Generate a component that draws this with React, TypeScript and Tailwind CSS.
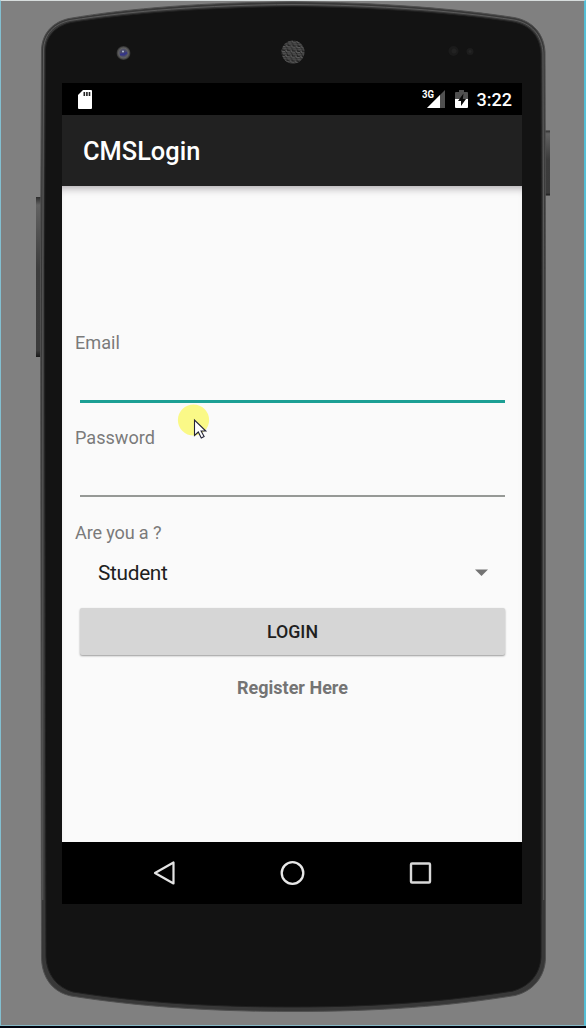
import React from "react";

function Chassis() {
  const outline =
    "M40.5 270 L41.5 50 C42 33 53 22 69 18.5 C130 8 205 2.500 293 1.800 C380 2.500 455 8.500 514 17.500 C533 21 544 34 545 52 L545.5 270 L545.5 958 C545 977 533 991 515 995.5 C450 1006 380 1011.5 293 1011.5 C205 1011.5 135 1006 71 996 C52 992 42 977 41.5 958 Z";
  const face =
    "M44.5 270 L45.5 50 C46 36 56 26 71 22.5 C131 13 205 7.5 293 6.5 C380 7.5 455 13 513 22 C530 25 540 36 541 54 L541.5 270 L541 957 C540 974 530 986 513 991 C450 1001 380 1007 293 1007 C205 1007 137 1002 73 992 C56 987 47 974 46 957 Z";
  return (
    <svg className="absolute inset-0" width="586" height="1028" viewBox="0 0 586 1028" aria-hidden="true">
      <defs>
        <linearGradient id="side" x1="0" y1="0" x2="0" y2="1">
          <stop offset="0" stopColor="#2c2c2c" />
          <stop offset=".05" stopColor="#626262" />
          <stop offset=".45" stopColor="#3c3c3c" />
          <stop offset=".96" stopColor="#3b3b3b" />
          <stop offset="1" stopColor="#191919" />
        </linearGradient>
        <radialGradient id="lens">
          <stop offset="0" stopColor="#3c3d72" />
          <stop offset=".45" stopColor="#4a4b69" />
          <stop offset=".7" stopColor="#606060" />
          <stop offset="1" stopColor="#2d2d2d" />
        </radialGradient>
        <pattern id="mesh" width="5" height="5" patternUnits="userSpaceOnUse" patternTransform="rotate(4)">
          <path d="M0 1.500H3V4H5M1 1.500V4H3M3 .3H5M4.500 .3V2" fill="none" stroke="#666" strokeWidth=".8" />
        </pattern>
      </defs>
      <rect x="36" y="197" width="6" height="160" fill="url(#side)" />
      <rect x="544" y="130.500" width="6" height="65" fill="url(#side)" />
      <path d={outline} fill="#383838" stroke="#505050" strokeWidth="1" />
      <path d={face} fill="#131313" stroke="#202020" strokeWidth="1" />
      <path d="M42.800 900V270L43.500 50C44 34 54 24 70 20.500C131 11 205 5 293 4.500C380 5 455 11 514 20C531 23 542 35 543 53L543.700 270V900" fill="none" stroke="#606060" strokeWidth=".9" />
      <circle cx="123.500" cy="53" r="7" fill="url(#lens)" />
      <circle cx="123" cy="51.500" r="1" fill="#b5bfd3" />
      <path d="M120 54.500h4l3-2" fill="none" stroke="#343489" strokeWidth="2" />
      <circle cx="293" cy="52" r="11.500" fill="#222" />
      <circle cx="293" cy="52" r="11.500" fill="url(#mesh)" />
      <circle cx="453.500" cy="51" r="5" fill="#1b1b1b" />
      <circle cx="454" cy="51" r="2.500" fill="#222" />
      <circle cx="470" cy="51.500" r="3.500" fill="#1d1d1d" />
      <circle cx="470" cy="51.500" r="1.500" fill="#252525" />
    </svg>
  );
}

function StatusBar() {
  return (
    <div className="flex h-8 shrink-0 items-center bg-black pl-4 pr-[10px] text-white">
      <svg width="14" height="19" viewBox="0 0 14 19" aria-label="SD card">
        <path d="M5 0H13Q14 0 14 1V18Q14 19 13 19H1Q0 19 0 18V5Z" fill="#fff" />
        <path d="M5.500 2h1.600v4H5.500zM8.100 2h1.600v4H8.100zM10.700 2h1.600v4h-1.600z" fill="#222" />
      </svg>
      <div className="ml-auto flex items-center">
        <svg width="24" height="20" viewBox="0 0 24 20" aria-label="3G signal">
          <path d="M23 1V19H5Z" fill="#505050" />
          <path d="M18 6V19H5Z" fill="#fff" />
          <text x="0" y="9.200" fill="#fff" fontFamily="Roboto" fontSize="10" fontWeight="700" textLength="12" lengthAdjust="spacingAndGlyphs">3G</text>
        </svg>
        <svg className="ml-[9px]" width="13" height="20" viewBox="0 0 13 20" aria-label="Charging">
          <path d="M4 1h5v2h3q1 0 1 1v6H0V4q0-1 1-1h3Z" fill="#505050" />
          <path d="M0 10h13v8q0 1-1 1H1q-1 0-1-1Z" fill="#fff" />
          <path d="M8.500 4.500 3 12h3v5l5-7H7.800Z" fill="#080808" />
        </svg>
        <span className="ml-[9px] translate-y-px text-[18px] leading-none font-medium">3:22</span>
      </div>
    </div>
  );
}

function TextField({ label, type, active }: { label: string; type: string; active?: boolean }) {
  return (
    <label className="block h-[95px] text-[18.100px] leading-[22px] text-[#7a7a7a]">
      {label}
      <input
        type={type}
        aria-label={label}
        className={
          active
            ? "ml-[5px] mt-[7px] block h-[42px] w-[425px] border-b-[3px] border-[#1c9f94] bg-transparent outline-none"
            : "ml-[5px] mt-[7px] block h-[41px] w-[425px] border-b-2 border-[#969996] bg-transparent outline-none"
        }
      />
    </label>
  );
}

function LoginForm() {
  return (
    <main className="h-[656px] shrink-0 bg-[#fafafa] shadow-[inset_0_8px_8px_-6px_#a8a3a8]">
      <form className="pl-[13px] pt-[146px]" onSubmit={(e) => e.preventDefault()}>
        <TextField label="Email" type="email" active />
        <TextField label="Password" type="password" />
        <div className="text-[18.100px] leading-[22px] tracking-[-0.150px] text-[#7a7a7a]">Are you a ?</div>
        <button type="button" className="ml-[5px] mt-[14px] flex h-[30px] w-[425px] items-center justify-between pl-[18px] pr-[17px] text-[20.800px] leading-none tracking-[-0.300px] text-[#202020]">
          Student
          <svg width="13" height="8" viewBox="0 0 13 8" aria-hidden="true">
            <path d="M0 .5h13L6.500 7Z" fill="#737373" />
          </svg>
        </button>
        <button type="submit" className="ml-[5px] mt-[20px] block h-[47px] w-[425px] rounded-[2px] bg-[#d6d6d6] pt-px text-[17.800px] font-medium text-[#202020] shadow-[0_1px_2px_#999]">
          LOGIN
        </button>
        <div className="ml-[5px] mt-[22px] w-[425px] text-center text-[18px] leading-[22px] font-bold text-[#747474]">Register Here</div>
      </form>
    </main>
  );
}

function NavigationBar() {
  return (
    <nav className="grid h-[62px] shrink-0 grid-cols-3 items-center justify-items-center bg-black px-[38px]">
      <svg width="26" height="26" viewBox="0 0 26 26" aria-label="Back">
        <path d="M4 13 22.500 2.500v21Z" fill="none" stroke="#e4e4e4" strokeWidth="2.200" strokeLinejoin="round" />
      </svg>
      <svg width="26" height="26" viewBox="0 0 26 26" aria-label="Home">
        <circle cx="13.500" cy="13" r="10.800" fill="none" stroke="#e8e8e8" strokeWidth="2.300" />
      </svg>
      <svg width="26" height="26" viewBox="0 0 26 26" aria-label="Recent apps">
        <rect x="4" y="3.500" width="19" height="19" rx="1" fill="none" stroke="#d9d9d9" strokeWidth="2.400" />
      </svg>
    </nav>
  );
}

function Pointer() {
  return (
    <svg className="pointer-events-none absolute left-[177px] top-[403px]" width="34" height="38" viewBox="0 0 34 38" aria-hidden="true">
      <circle cx="16.500" cy="17" r="15.600" fill="#faf987" />
      <path d="M17.500 17V32.500l3.800-3.500 3 6 2.800-1.400-3-5.600h4.700Z" fill="#fff" stroke="#242438" strokeWidth="1.100" />
    </svg>
  );
}

export default function App() {
  return (
    <div className="relative h-[1028px] w-[586px] overflow-hidden bg-[#808080] pl-[62px] pt-[83px] font-['Roboto',sans-serif]">
      <Chassis />
      <div className="relative flex h-[821px] w-[460px] flex-col">
        <StatusBar />
        <header className="flex h-[71px] shrink-0 items-center bg-[#212121] pl-[21px] pt-[2px] text-[25.400px] font-medium text-white">CMSLogin</header>
        <LoginForm />
        <NavigationBar />
      </div>
      <Pointer />
      <div className="pointer-events-none absolute inset-0 border-b-2 border-[#01040e]" />
      <div className="pointer-events-none absolute inset-x-0 bottom-[2px] top-0 border border-r-2 border-b-[#83b7c5] border-l-[#83bfd0] border-r-[#55bed5] border-t-[#d7dddd]" />
    </div>
  );
}
